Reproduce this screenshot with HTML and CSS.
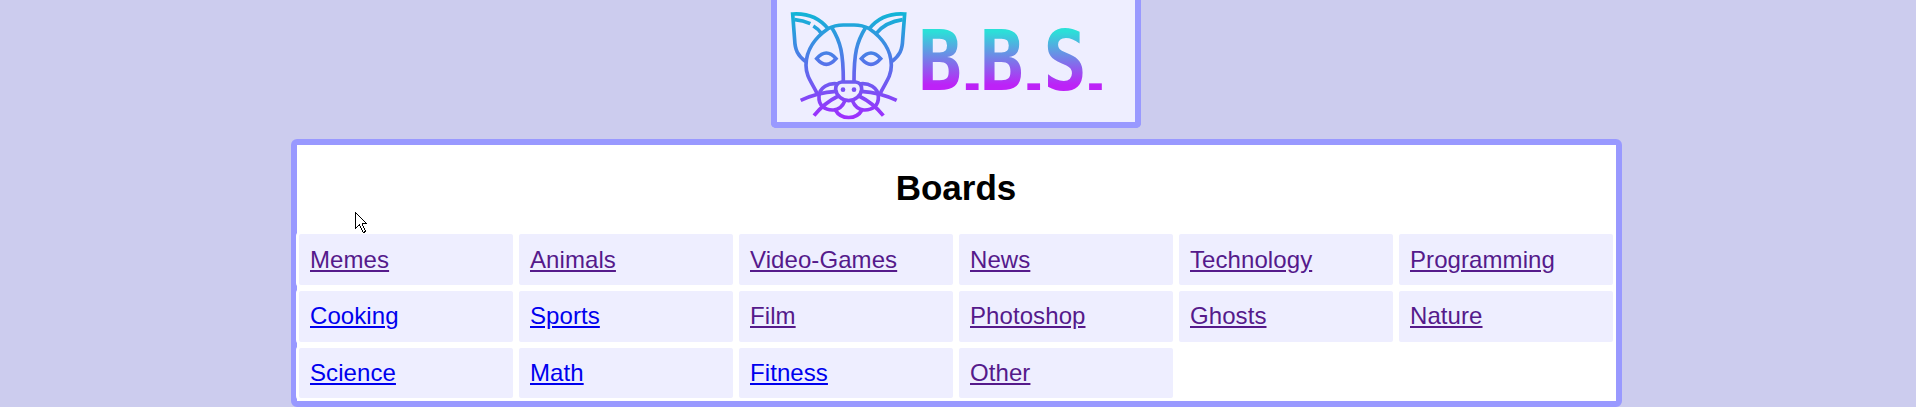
FILE: index.html
```html
<!DOCTYPE html>
<html lang="en">
<head>
<meta charset="utf-8">
<title>B.B.S.</title>
<link rel="stylesheet" href="styles.css">
</head>
<body>
<div class="page">
  <header class="logo">
    <svg class="logo-art" viewBox="36 0 1074 366" role="img" aria-label="B.B.S.">
      <defs>
        <linearGradient id="cat" gradientUnits="userSpaceOnUse" x1="0" y1="36" x2="0" y2="358">
          <stop offset="0" stop-color="#10b6d6"/>
          <stop offset="1" stop-color="#a02cff"/>
        </linearGradient>
        <linearGradient id="word" gradientUnits="userSpaceOnUse" x1="0" y1="85" x2="0" y2="270">
          <stop offset="0.05" stop-color="#2be0d8"/>
          <stop offset="0.92" stop-color="#bd22f7"/>
        </linearGradient>
      </defs>
      <g fill="none" stroke="url(#cat)" stroke-width="11">
        <path d="M122 185C98 166 90 150 89 120L83 42C128 39 164 55 189 86"/>
        <path d="M380 185C404 166 412 150 413 120L419 42C374 39 338 55 313 86"/>
        <path d="M89 59Q114 61 136 71M145 78Q160 87 169 100M413 59Q362 66 334 100"/>
        <path d="M158 284C143 250 123 232 123 196C123 148 154 110 189 86Q210 75 235 75H267Q292 75 313 86C348 110 379 148 379 196C379 232 359 250 344 284"/>
        <path d="M201 84C227 126 235 160 235 245M301 84C275 126 267 160 267 245"/>
        <path d="M155 176Q184 142 213 176Q184 210 155 176ZM289 176Q318 142 347 176Q318 210 289 176Z"/>
        <path d="M230 246H272Q290 248 290 268C288 288 270 301 251 302C232 301 214 288 212 268Q212 248 230 246Z"/>
        <path d="M221 252C190 246 163 264 162 289C160 316 180 331 205 330Q229 329 240 302"/>
        <path d="M281 252C312 246 339 264 340 289C342 316 322 331 297 330Q273 329 262 302"/>
        <path d="M211 330C228 360 274 360 291 330"/>
        <path d="M214 274Q155 278 107 301M288 274Q347 278 395 301M220 288Q176 310 147 347M282 288Q326 310 355 347"/>
      </g>
      <circle cx="234" cy="269" r="7" fill="url(#cat)"/>
      <circle cx="267" cy="269" r="7" fill="url(#cat)"/>
      <g fill="url(#word)">
        <text class="letter" transform="translate(460 0) scale(.86 1)" y="270">B</text>
        <text class="dot" transform="translate(584 0) scale(2 1)" y="270">.</text>
        <text class="letter" transform="translate(645 0) scale(.86 1)" y="270">B</text>
        <text class="dot" transform="translate(769 0) scale(2 1)" y="270">.</text>
        <text class="letter" transform="translate(835 0) scale(.86 1)" y="270">S</text>
        <text class="dot" transform="translate(954 0) scale(2 1)" y="270">.</text>
      </g>
    </svg>
  </header>
  <main class="boards">
    <h1 class="title">Boards</h1>
    <nav class="grid">
      <div class="cell"><a class="seen" href="#">Memes</a></div>
      <div class="cell"><a class="seen" href="#">Animals</a></div>
      <div class="cell"><a class="seen" href="#">Video-Games</a></div>
      <div class="cell"><a class="seen" href="#">News</a></div>
      <div class="cell"><a class="seen" href="#">Technology</a></div>
      <div class="cell"><a class="seen" href="#">Programming</a></div>
      <div class="cell"><a class="fresh" href="#">Cooking</a></div>
      <div class="cell"><a class="fresh" href="#">Sports</a></div>
      <div class="cell"><a class="seen" href="#">Film</a></div>
      <div class="cell"><a class="seen" href="#">Photoshop</a></div>
      <div class="cell"><a class="seen" href="#">Ghosts</a></div>
      <div class="cell"><a class="seen" href="#">Nature</a></div>
      <div class="cell"><a class="fresh" href="#">Science</a></div>
      <div class="cell"><a class="fresh" href="#">Math</a></div>
      <div class="cell"><a class="fresh" href="#">Fitness</a></div>
      <div class="cell"><a class="seen" href="#">Other</a></div>
    </nav>
  </main>
</div>
<svg class="pointer" viewBox="0 0 13 22" shape-rendering="crispEdges">
  <path d="M.5 .5V16.5L4.5 12.5L7.5 19.5L8.5 20.5L10.5 19.5L7.5 12.5V11.5H11.5Z" fill="#fff" stroke="#000"/>
</svg>
</body>
</html>
```
FILE: styles.css
```css
* { box-sizing: border-box; }
body {
  margin: 0;
  height: 407px;
  overflow: hidden;
  background: #ccccee;
  font-family: "Liberation Sans", Arial, sans-serif;
  font-size: 24px;
}
.page {
  width: 1331px;
  margin-left: 291px;
}
.logo {
  width: 370px;
  height: 128px;
  margin-left: 480px;
  border: 6px solid #9999ff;
  border-top: 0;
  border-radius: 0 0 5px 5px;
  background: #eeeeff;
}
.logo-art {
  display: block;
  width: 358px;
  height: 122px;
}
.letter {
  font: bold 253px "DejaVu Sans Mono", monospace;
}
.dot {
  font: bold 135px "Liberation Sans", sans-serif;
}
.boards {
  height: 268px;
  margin-top: 11px;
  border: 6px solid #9999ff;
  border-radius: 6px;
  background: #fff;
}
.title {
  height: 86px;
  margin: 0;
  padding-right: 1px;
  font-size: 35px;
  line-height: 85px;
  text-align: center;
}
.grid {
  display: grid;
  grid-template-columns: repeat(6, 220px);
  grid-auto-rows: 56.75px;
  margin-left: -1px;
}
.cell {
  padding: 9.6px 11px 8px;
  border: 3px solid #fff;
  border-radius: 5px;
  background: #eeeeff;
  line-height: 32.6px;
  letter-spacing: 0.08px;
}
.seen { color: #551a8b; }
.fresh { color: #0000ee; }
.pointer {
  position: absolute;
  left: 355px;
  top: 212px;
  width: 13px;
  height: 22px;
}
```
